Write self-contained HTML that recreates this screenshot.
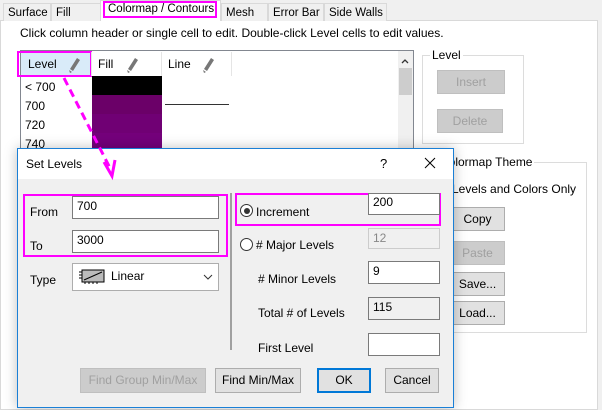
<!DOCTYPE html><html><head><style>
*{box-sizing:border-box}
body{margin:0;width:602px;height:410px;overflow:hidden;background:#f0f0f0;font-family:"Liberation Sans",sans-serif;font-size:12px;color:#000;position:relative}
.a{position:absolute;white-space:nowrap}
.tab{position:absolute;top:3px;height:18px;border:1px solid #d9d9d9;border-bottom:none;background:#f0f0f0;padding:3px 0 0 4px;white-space:nowrap;font-size:11.5px;overflow:hidden}
.btn{position:absolute;background:#e1e1e1;border:1px solid #adadad;text-align:center;line-height:22px;white-space:nowrap}
.dis{color:#a0a0a0;background:#cccccc;border-color:#bfbfbf}
.inp{position:absolute;background:#fff;border:1px solid #7a7a7a;padding:2px 0 0 4px;font-size:12px;white-space:nowrap}
</style></head><body>
<div class="a" style="left:0;top:20px;width:598px;height:390px;background:#fff;border:1px solid #d9d9d9"></div>
<div class="tab" style="left:3px;width:48px">Surface</div>
<div class="tab" style="left:51px;width:50px">Fill</div>
<div class="tab" style="left:100px;width:121px;top:0;height:21px;background:#fff"></div>
<div class="a" style="left:103px;top:1px;width:114px;height:17px;border:2px solid #f0f;padding:0 0 0 3px;line-height:13px;font-size:11.5px">Colormap / Contours</div>
<div class="tab" style="left:221px;width:47px">Mesh</div>
<div class="tab" style="left:268px;width:56px">Error Bar</div>
<div class="tab" style="left:324px;width:63px">Side Walls</div>
<div class="a" style="left:20px;top:26px">Click column header or single cell to edit. Double-click Level cells to edit values.</div>
<div class="a" style="left:20px;top:50px;width:394px;height:110px;border:1px solid #828790;background:#fff"></div>
<div class="a" style="left:21px;top:52px;width:70px;height:24px;background:#d9ebf9"></div>
<div class="a" style="left:17px;top:51px;width:75px;height:26px;border:2px solid #f0f"></div>
<div class="a" style="left:28px;top:57px">Level</div>
<div class="a" style="left:98px;top:57px">Fill</div>
<div class="a" style="left:168px;top:57px">Line</div>
<svg class="a" style="left:0;top:0" width="240" height="80" fill="#777"><g id="g"><path d="M70 69 L77 58 L80 60 L73 71 Z"/><path d="M69 70 L70 73 L72 72 Z"/></g><use href="#g" x="58"/><use href="#g" x="134"/></svg>
<div class="a" style="left:91px;top:52px;width:1px;height:24px;background:#e5e5e5"></div>
<div class="a" style="left:161px;top:52px;width:1px;height:24px;background:#e5e5e5"></div>
<div class="a" style="left:231px;top:52px;width:1px;height:24px;background:#e5e5e5"></div>
<div class="a" style="left:398px;top:51px;width:15px;height:108px;background:#f0f0f0"></div>
<svg class="a" style="left:400px;top:57px" width="10" height="8"><path d="M2 6 L5 3 L8 6" stroke="#333" stroke-width="1.3" fill="none"/></svg>
<div class="a" style="left:399px;top:68px;width:13px;height:27px;background:#cdcdcd"></div>
<div class="a" style="left:25px;top:80px">&lt; 700</div>
<div class="a" style="left:25px;top:99px">700</div>
<div class="a" style="left:25px;top:118px">720</div>
<div class="a" style="left:25px;top:137px">740</div>
<div class="a" style="left:92px;top:76px;width:70px;height:19px;background:#000"></div>
<div class="a" style="left:92px;top:95px;width:70px;height:19px;background:#6b0068"></div>
<div class="a" style="left:92px;top:114px;width:70px;height:19px;background:#700074"></div>
<div class="a" style="left:92px;top:133px;width:70px;height:20px;background:#74007b"></div>
<div class="a" style="left:165px;top:104px;width:64px;height:1px;background:#333"></div>
<div class="a" style="left:422px;top:55px;width:102px;height:89px;border:1px solid #dcdcdc"></div>
<div class="a" style="left:430px;top:48px;background:#fff;padding:0 2px">Level</div>
<div class="btn dis" style="left:437px;top:70px;width:68px;height:24px">Insert</div>
<div class="btn dis" style="left:437px;top:109px;width:66px;height:24px">Delete</div>
<div class="a" style="left:440px;top:162px;width:147px;height:171px;border:1px solid #dcdcdc"></div>
<div class="a" style="left:438px;top:155px;background:#fff;padding:0 2px">Colormap Theme</div>
<div class="a" style="left:452px;top:182px">Levels and Colors Only</div>
<div class="btn" style="left:440px;top:207px;width:65px;height:24px;padding-left:10px">Copy</div>
<div class="btn dis" style="left:440px;top:241px;width:65px;height:24px;padding-left:10px">Paste</div>
<div class="btn" style="left:440px;top:272px;width:65px;height:24px;padding-left:10px">Save...</div>
<div class="btn" style="left:440px;top:301px;width:65px;height:24px;padding-left:10px">Load...</div>
<!-- dialog -->
<div class="a" style="left:17px;top:148px;width:437px;height:260px;border:1px solid #1a7fd6;background:#f0f0f0;box-shadow:0 0 12px rgba(0,0,0,.25)"></div>
<div class="a" style="left:18px;top:149px;width:435px;height:30px;background:#fff"></div>
<div class="a" style="left:26px;top:157px">Set Levels</div>
<div class="a" style="left:380px;top:156px;font-size:13px">?</div>
<svg class="a" style="left:424px;top:157px" width="12" height="12"><path d="M1 1 L11 11 M11 1 L1 11" stroke="#000" stroke-width="1"/></svg>
<svg class="a" style="left:0;top:0" width="602" height="410"><path d="M64 78 L110 168" stroke="#f0f" stroke-width="3" stroke-dasharray="8,5" fill="none"/><path d="M104 162 L112 176 L115 160" stroke="#f0f" stroke-width="3" fill="none"/></svg>
<div class="a" style="left:23px;top:194px;width:205px;height:63px;border:2px solid #f0f"></div>
<div class="a" style="left:30px;top:205px">From</div>
<div class="inp" style="left:72px;top:196px;width:147px;height:23px">700</div>
<div class="a" style="left:30px;top:239px">To</div>
<div class="inp" style="left:72px;top:230px;width:147px;height:23px">3000</div>
<div class="a" style="left:30px;top:273px">Type</div>
<div class="inp" style="left:72px;top:263px;width:147px;height:28px;border-color:#adadad;padding:5px 0 0 38px">Linear</div>
<svg class="a" style="left:78px;top:268px" width="30" height="18"><rect x="4" y="2" width="22" height="12" fill="#bbb" stroke="#000"/><path d="M6 12 L24 4" stroke="#000"/><path d="M1 4h3M1 7h3M1 10h3M7 16v-2M11 16v-2M15 16v-2M19 16v-2" stroke="#000"/></svg>
<svg class="a" style="left:203px;top:273px" width="10" height="8"><path d="M1 2 L5 6 L9 2" stroke="#333" fill="none"/></svg>
<div class="a" style="left:230px;top:193px;width:2px;height:157px;background:#a0a0a0"></div>
<div class="a" style="left:235px;top:193px;width:206px;height:33px;border:2px solid #f0f"></div>
<div class="a" style="left:240px;top:204px;width:13px;height:13px;border:1px solid #333;border-radius:50%;background:#fff"></div>
<div class="a" style="left:243.5px;top:207.5px;width:6px;height:6px;border-radius:50%;background:#333"></div>
<div class="a" style="left:256px;top:205px">Increment</div>
<div class="inp" style="left:368px;top:193px;width:72px;height:22px;padding-top:1px">200</div>
<div class="a" style="left:240px;top:238px;width:13px;height:13px;border:1px solid #333;border-radius:50%;background:#fff"></div>
<div class="a" style="left:256px;top:238px"># Major Levels</div>
<div class="inp" style="left:368px;top:228px;width:72px;height:21px;background:#f0f0f0;border-color:#ccc;color:#888">12</div>
<div class="a" style="left:258px;top:272px"># Minor Levels</div>
<div class="inp" style="left:368px;top:261px;width:72px;height:23px">9</div>
<div class="a" style="left:258px;top:306px">Total # of Levels</div>
<div class="inp" style="left:368px;top:297px;width:72px;height:23px;background:#f0f0f0">115</div>
<div class="a" style="left:258px;top:341px">First Level</div>
<div class="inp" style="left:368px;top:333px;width:72px;height:23px"></div>
<div class="btn dis" style="left:80px;top:368px;width:126px;height:25px">Find Group Min/Max</div>
<div class="btn" style="left:215px;top:368px;width:86px;height:25px">Find Min/Max</div>
<div class="btn" style="left:317px;top:368px;width:54px;height:25px;border:2px solid #0078d7;line-height:21px">OK</div>
<div class="btn" style="left:385px;top:368px;width:54px;height:25px">Cancel</div>
</body></html>
